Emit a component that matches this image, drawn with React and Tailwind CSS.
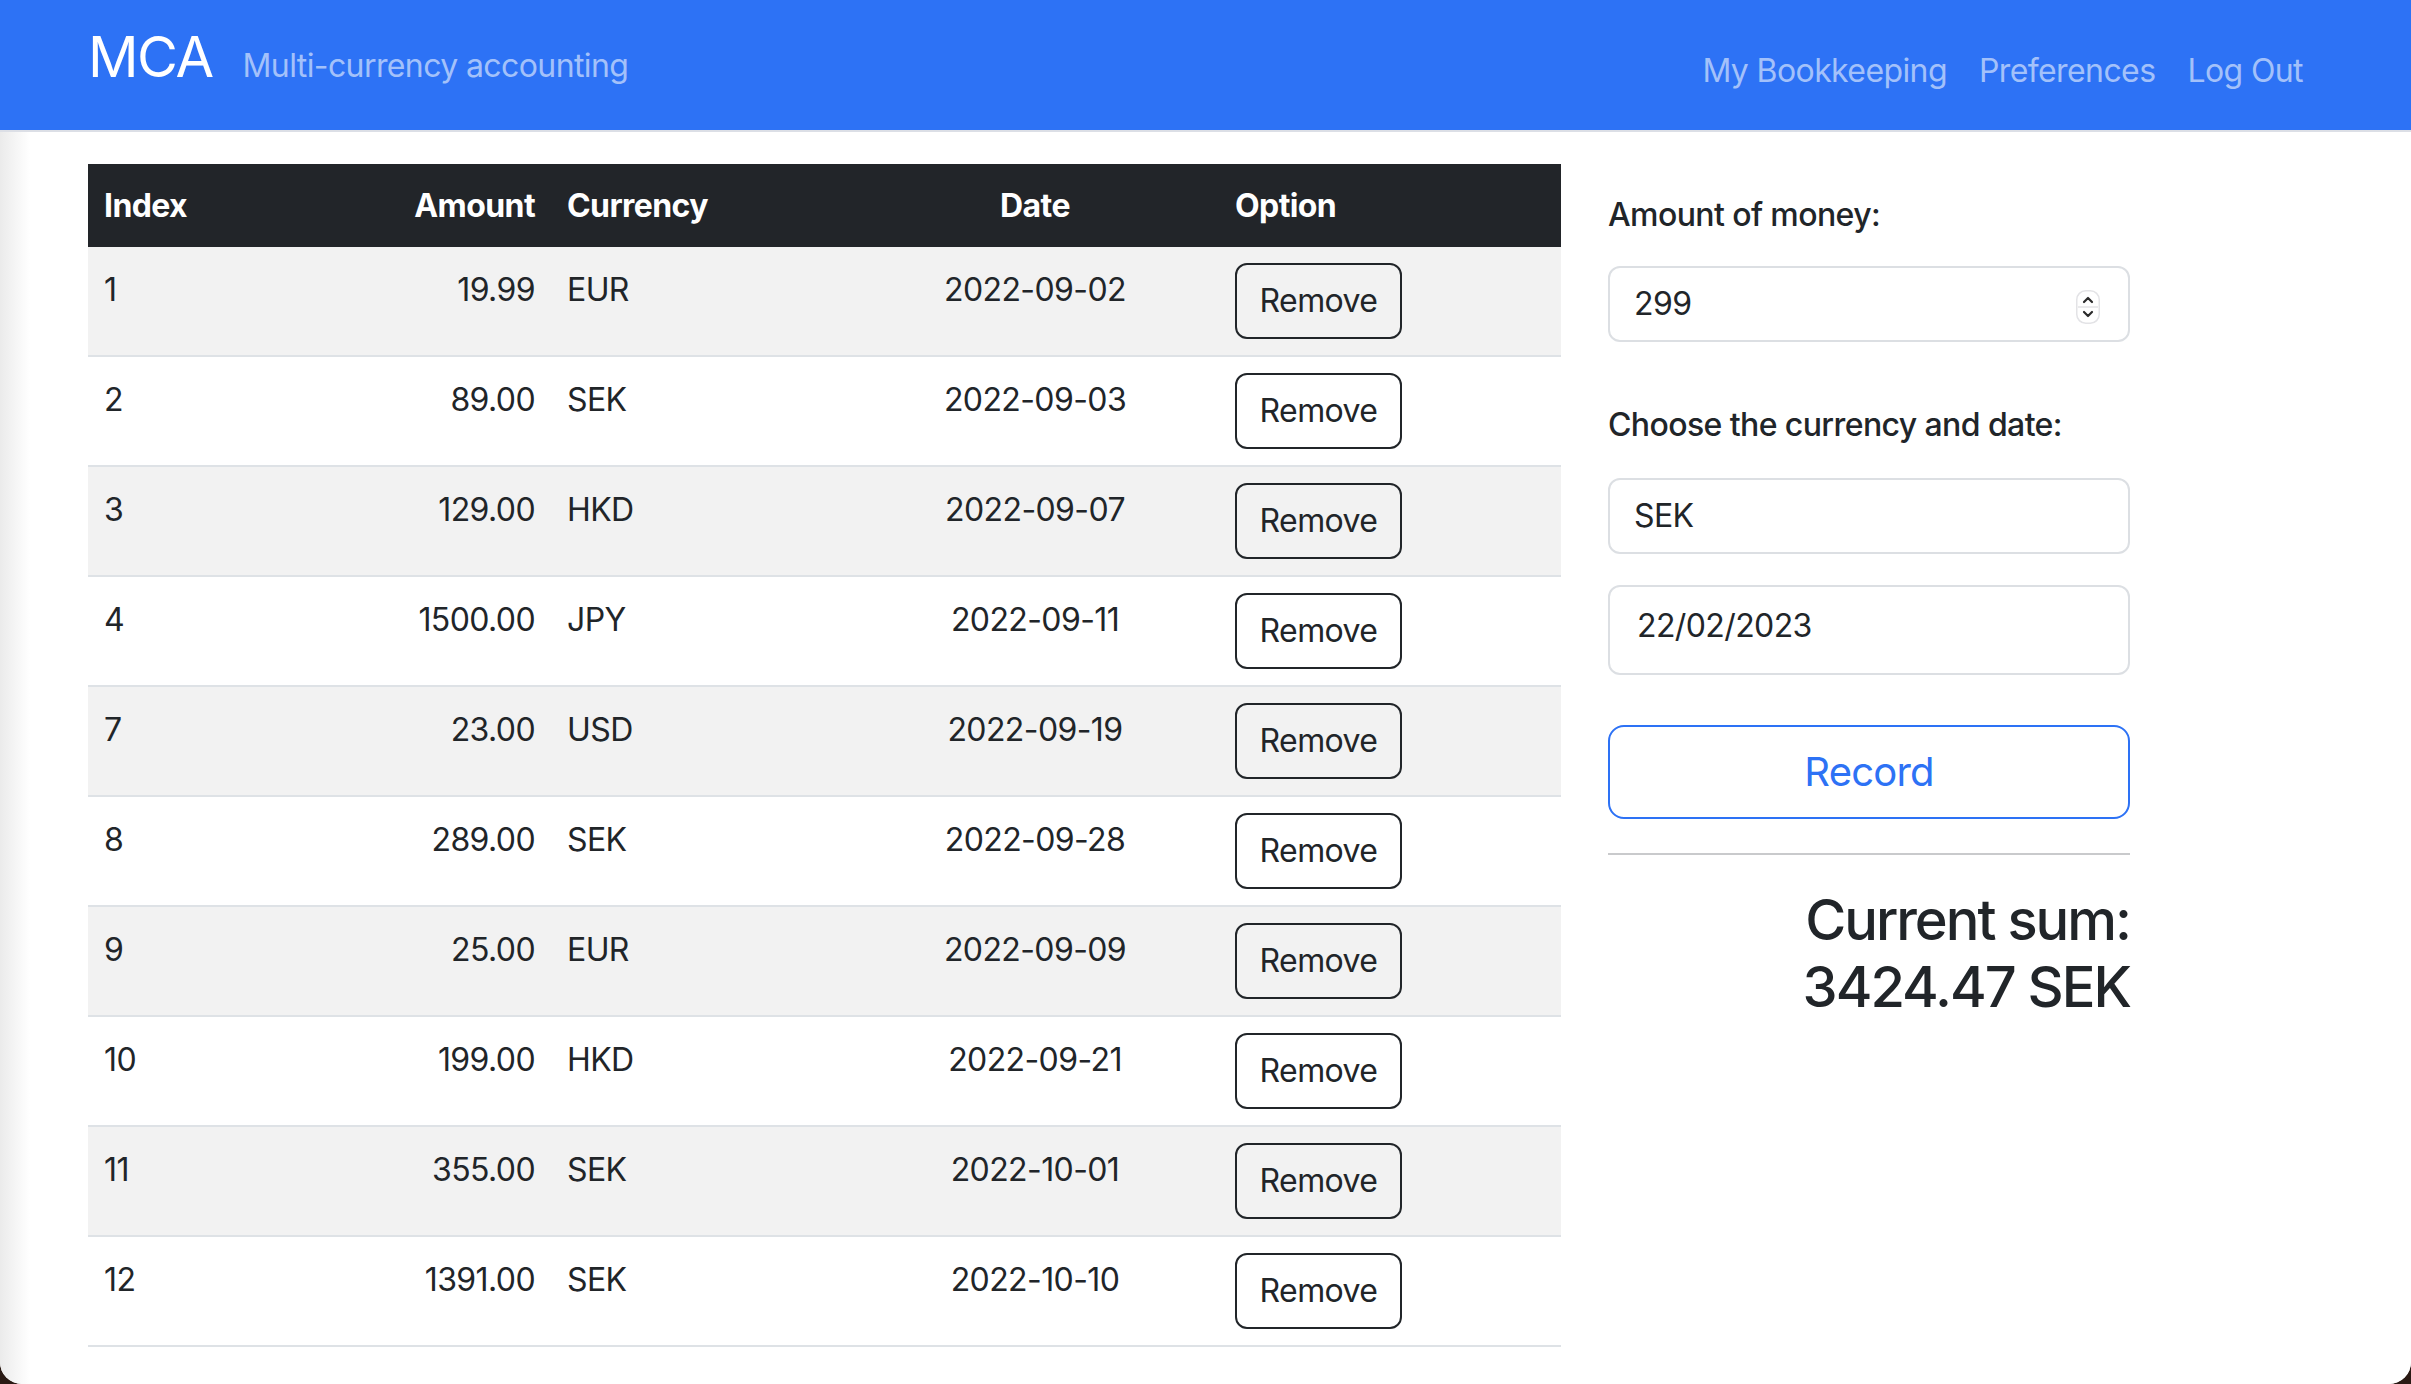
import React from 'react';

const entries = [
  { index: 1, amount: '19.99', currency: 'EUR', date: '2022-09-02' },
  { index: 2, amount: '89.00', currency: 'SEK', date: '2022-09-03' },
  { index: 3, amount: '129.00', currency: 'HKD', date: '2022-09-07' },
  { index: 4, amount: '1500.00', currency: 'JPY', date: '2022-09-11' },
  { index: 7, amount: '23.00', currency: 'USD', date: '2022-09-19' },
  { index: 8, amount: '289.00', currency: 'SEK', date: '2022-09-28' },
  { index: 9, amount: '25.00', currency: 'EUR', date: '2022-09-09' },
  { index: 10, amount: '199.00', currency: 'HKD', date: '2022-09-21' },
  { index: 11, amount: '355.00', currency: 'SEK', date: '2022-10-01' },
  { index: 12, amount: '1391.00', currency: 'SEK', date: '2022-10-10' },
];

const Spinner = () => (
  <svg width="24" height="34" viewBox="0 0 24 34" className="absolute right-[28px] top-[22px]">
    <rect x="0.75" y="0.75" width="22.5" height="32.5" rx="9" fill="#fff" stroke="#e3e3e6" strokeWidth="1.5" />
    <line x1="2" y1="17" x2="22" y2="17" stroke="#e3e3e6" strokeWidth="1.5" />
    <path d="M8 12 L12 8 L16 12" fill="none" stroke="#2b2b2b" strokeWidth="2.2" strokeLinecap="round" strokeLinejoin="round" />
    <path d="M8 22 L12 26 L16 22" fill="none" stroke="#2b2b2b" strokeWidth="2.2" strokeLinecap="round" strokeLinejoin="round" />
  </svg>
);

const Navbar = () => (
  <header className="flex h-[130px] items-start justify-between bg-[#2d72f5] pl-[88px] pr-[108px]">
    <div className="mt-[29px] flex items-baseline gap-[30px]">
      <span className="text-[56px] leading-none tracking-[-1.5px] text-white">MCA</span>
      <span className="text-[32px] leading-none tracking-[-0.6px] text-[#a3c1fa]">Multi-currency accounting</span>
    </div>
    <nav className="mt-[55px] flex gap-[32px] text-[32px] leading-none tracking-[-0.6px] text-[#a3c1fa]">
      <a>My Bookkeeping</a>
      <a>Preferences</a>
      <a>Log Out</a>
    </nav>
  </header>
);

const EntryTable = () => (
  <table className="w-[1473px] table-fixed border-collapse text-[32px] leading-[48px] tracking-[-0.6px] text-[#212529]">
    <colgroup>
      <col className="w-[212px]" />
      <col className="w-[251px]" />
      <col className="w-[300px]" />
      <col className="w-[368px]" />
      <col className="w-[342px]" />
    </colgroup>
    <thead>
      <tr className="h-[83px] bg-[#222529] text-white">
        <th className="px-4 text-left font-bold">Index</th>
        <th className="px-4 text-right font-bold">Amount</th>
        <th className="px-4 text-left font-bold">Currency</th>
        <th className="px-4 text-center font-bold">Date</th>
        <th className="px-4 text-left font-bold">Option</th>
      </tr>
    </thead>
    <tbody>
      {entries.map((e, i) => (
        <tr key={e.index} className={`border-b-2 border-[#dee2e6] ${i % 2 === 0 ? 'bg-[#f2f2f2]' : 'bg-white'}`}>
          <td className="px-4 pt-[19px] align-top">{e.index}</td>
          <td className="px-4 pt-[19px] text-right align-top">{e.amount}</td>
          <td className="px-4 pt-[19px] align-top">{e.currency}</td>
          <td className="px-4 pt-[19px] text-center align-top">{e.date}</td>
          <td className="p-4 align-top">
            <button className="block h-[76px] w-[167px] rounded-[12px] border-2 border-[#212529] text-[32px] leading-[48px] text-[#212529]">
              Remove
            </button>
          </td>
        </tr>
      ))}
    </tbody>
  </table>
);

const RecordForm = () => (
  <div className="flex w-[522px] flex-col pt-[27px] text-[32px] leading-[48px] tracking-[-0.6px] text-[#212529]">
    <label className="font-medium">Amount of money:</label>
    <div className="relative mt-[27px] flex h-[76px] items-center rounded-[12px] border-2 border-[#dcdfe3] px-[24px]">
      299
      <Spinner />
    </div>
    <label className="mt-[59px] font-medium">Choose the currency and date:</label>
    <div className="mt-[29px] flex h-[76px] items-center rounded-[12px] border-2 border-[#dcdfe3] px-[24px]">SEK</div>
    <div className="mt-[31px] flex h-[90px] items-center rounded-[12px] border-2 border-[#dcdfe3] pb-[8px] pl-[27px]">22/02/2023</div>
    <button className="mt-[50px] h-[94px] rounded-[16px] border-2 border-[#2d72f5] text-[40px] tracking-[-0.8px] text-[#2d72f5]">Record</button>
    <hr className="mt-[34px] border-t-2 border-[#c9cacc]" />
    <h3 className="mt-[32px] text-right text-[56px] font-medium leading-[67px] tracking-[-2px]">
      Current sum:
      <br />
      3424.47 SEK
    </h3>
  </div>
);

export default function App() {
  return (
    <div className="h-[1384px] w-[2411px] overflow-hidden bg-[#2a1a14] font-['Inter','Liberation_Sans',sans-serif]">
      <div className="h-full overflow-hidden rounded-b-[22px] bg-white">
        <Navbar />
        <div className="h-[2px] bg-[#dcdfe6]" />
        <main className="flex h-full items-start gap-[47px] bg-[linear-gradient(to_right,#ebebeb,#ffffff_30px)] pl-[88px] pt-[32px]">
          <EntryTable />
          <RecordForm />
        </main>
      </div>
    </div>
  );
}
